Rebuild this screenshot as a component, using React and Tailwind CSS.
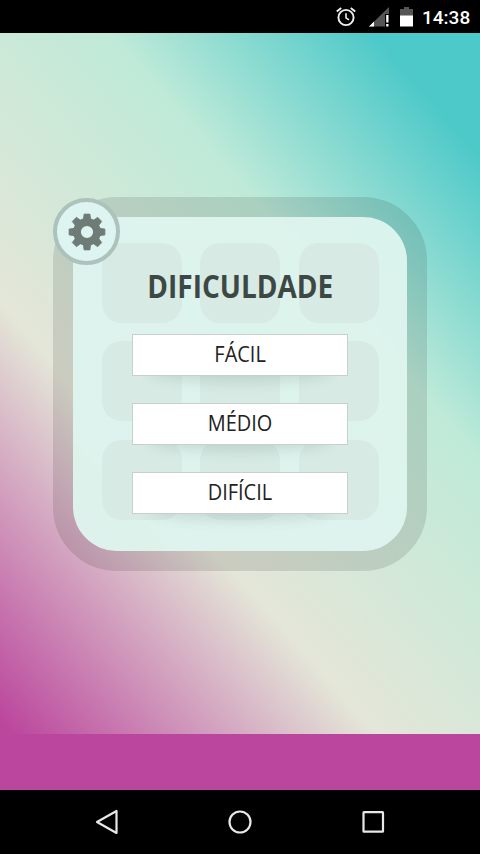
const LEVELS = ['FÁCIL', 'MÉDIO', 'DIFÍCIL'];
const TILES = [0, 1, 2, 3, 4, 5, 6, 7, 8];
const TEETH = [0, 45, 90, 135, 180, 225, 270, 315];

function AlarmIcon() {
  return (
    <svg width="20" height="20" viewBox="0 0 20 20" fill="none" stroke="#f0f0f0">
      <circle cx="10" cy="10.500" r="7.600" strokeWidth="1.9" />
      <path d="M10 6.300v4.500l3 2" strokeWidth="1.6" />
      <path d="M.8 4.600 5.200 1M19.200 4.600 14.800 1" strokeWidth="1.9" />
    </svg>
  );
}

function SignalIcon() {
  return (
    <svg width="21" height="20" viewBox="0 0 21 20">
      <path d="M20 0v7h-4v12.500H0z" fill="#555" />
      <path d="M5 14.500v5H0z" fill="#fff" />
      <path d="M17.200 8h2.300v7.500h-2.300zM17.200 17h2.300v2.500h-2.300z" fill="#fff" />
    </svg>
  );
}

function BatteryIcon() {
  return (
    <svg width="13" height="20" viewBox="0 0 13 20">
      <path d="M4 0h5v2h4v7H0V2h4z" fill="#555" />
      <path d="M0 8.500h13V19.500H0z" fill="#fff" />
    </svg>
  );
}

function StatusBar() {
  return (
    <div className="flex h-[33px] items-center justify-end bg-black pr-[11px]">
      <AlarmIcon />
      <div className="ml-[13px] flex">
        <SignalIcon />
      </div>
      <div className="ml-[10px] flex">
        <BatteryIcon />
      </div>
      <span className="ml-[9px] w-[47px] pt-[2px] font-['Roboto',sans-serif] text-[19px] leading-none font-medium text-white">
        14:38
      </span>
    </div>
  );
}

function GearIcon() {
  return (
    <svg width="38" height="38" viewBox="-19 -19 38 38">
      <g fill="#6e7b77" stroke="#6e7b77" strokeWidth="0.800" strokeLinejoin="round">
        {TEETH.map((angle) => (
          <path key={angle} d="M-3.900-11-2.900-17.900H2.900L3.900-11z" transform={`rotate(${angle})`} />
        ))}
      </g>
      <circle r="10" fill="none" stroke="#6e7b77" strokeWidth="7.800" />
    </svg>
  );
}

function SettingsButton() {
  return (
    <button className="absolute top-px left-0 flex size-[67px] items-center justify-center rounded-full border-4 border-[#abc2bd] bg-[#def4f0]">
      <GearIcon />
    </button>
  );
}

function LevelButton({ label }) {
  return (
    <div className="relative h-[42px] w-[216px]">
      <div className="absolute inset-x-[16px] bottom-[3px] h-[24px] rounded-[50%] shadow-[0_9px_13px_rgba(60,90,80,0.16)]" />
      <button className="relative flex h-full w-full items-center justify-center border border-[#c9cfcd] bg-white pb-[2px] font-['Open_Sans',sans-serif] text-[21px] leading-none text-[#222]">
        <span className="inline-block scale-x-[0.95]">{label}</span>
      </button>
    </div>
  );
}

function DifficultyCard() {
  return (
    <div className="relative size-[374px]">
      <div className="size-full rounded-[64px] border-[20px] border-black/11">
        <div className="h-full w-full rounded-[44px] bg-[#def4ed]/96">
          <div className="absolute top-[45.500px] left-[48.500px] grid grid-cols-3 gap-[18.500px]">
            {TILES.map((tile) => (
              <div key={tile} className="size-[80px] rounded-[20px] bg-[#d7ebe4]" />
            ))}
          </div>
          <div className="relative flex flex-col items-center pt-[51px]">
            <h1 className="scale-x-[0.875] font-['Open_Sans',sans-serif] text-[32px] leading-[36px] font-bold text-[#3d4845]">
              DIFICULDADE
            </h1>
            <div className="mt-[30px] flex flex-col gap-[27px]">
              {LEVELS.map((label) => (
                <LevelButton key={label} label={label} />
              ))}
            </div>
          </div>
        </div>
      </div>
      <SettingsButton />
    </div>
  );
}

function NavBar() {
  return (
    <div className="flex h-16 items-center justify-between bg-black px-[95px]">
      <svg width="24" height="26" viewBox="0 0 24 26" fill="none" stroke="#e8e8e8" strokeWidth="2.200">
        <path d="M2 13 21.500 2v22z" strokeLinejoin="round" />
      </svg>
      <svg width="24" height="24" viewBox="0 0 24 24" fill="none" stroke="#e8e8e8" strokeWidth="2.200">
        <circle cx="12" cy="12" r="10.500" />
      </svg>
      <svg width="24" height="24" viewBox="0 0 24 24" fill="none" stroke="#e8e8e8" strokeWidth="2.200">
        <rect x="2.500" y="2.200" width="19.500" height="19.500" rx="0.500" />
      </svg>
    </div>
  );
}

export default function App() {
  return (
    <div className="flex h-[854px] w-[480px] flex-col overflow-hidden bg-black">
      <StatusBar />
      <main className="flex h-[701px] items-start justify-center bg-[linear-gradient(49deg,#bb469d_1%,#e4e6d8_34.4%,#bfead8_66%,#4ec9c9_90%)] pt-[164px]">
        <DifficultyCard />
      </main>
      <div className="h-14 bg-[#bb469d]" />
      <NavBar />
    </div>
  );
}
